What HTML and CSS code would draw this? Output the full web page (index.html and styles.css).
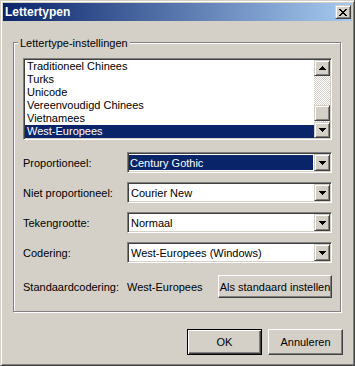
FILE: index.html
```html
<!DOCTYPE html>
<html lang="nl">
<head>
  <meta charset="UTF-8">
  <title>Lettertypen</title>
  <link rel="stylesheet" href="styles.css">
</head>
<body>
  <div class="window">
    <div class="titlebar">
      <span class="title">Lettertypen</span>
      <span class="close">
        <svg width="8" height="7" viewBox="0 0 8 7"><path d="M0 0h2v1H0zM6 0h2v1H6zM1 1h2v1H1zM5 1h2v1H5zM2 2h4v1H2zM3 3h2v1H3zM2 4h4v1H2zM1 5h2v1H1zM5 5h2v1H5zM0 6h2v1H0zM6 6h2v1H6z"/></svg>
      </span>
    </div>

    <div class="content">
      <div class="group">
        <span class="legend">Lettertype-instellingen</span>

        <div class="listbox">
          <ul class="items">
            <li>Traditioneel Chinees</li>
            <li>Turks</li>
            <li>Unicode</li>
            <li>Vereenvoudigd Chinees</li>
            <li>Vietnamees</li>
            <li class="selected">West-Europees</li>
          </ul>
          <div class="scrollbar">
            <span class="sb-btn"><svg width="7" height="4" viewBox="0 0 7 4"><path d="M3 0h1v1h1v1h1v1h1v1H0V3h1V2h1V1h1z"/></svg></span>
            <div class="sb-track"><span class="sb-thumb"></span></div>
            <span class="sb-btn"><svg width="7" height="4" viewBox="0 0 7 4"><path d="M0 0h7v1H6v1H5v1H4v1H3V3H2V2H1V1H0z"/></svg></span>
          </div>
        </div>

        <div class="fields">
          <div class="field-row">
            <label class="label">Proportioneel:</label>
            <div class="combo">
              <span class="combo-value"><span class="highlight">Century Gothic</span></span>
              <span class="combo-btn"><svg width="7" height="4" viewBox="0 0 7 4"><path d="M0 0h7v1H6v1H5v1H4v1H3V3H2V2H1V1H0z"/></svg></span>
            </div>
          </div>
          <div class="field-row">
            <label class="label">Niet proportioneel:</label>
            <div class="combo">
              <span class="combo-value">Courier New</span>
              <span class="combo-btn"><svg width="7" height="4" viewBox="0 0 7 4"><path d="M0 0h7v1H6v1H5v1H4v1H3V3H2V2H1V1H0z"/></svg></span>
            </div>
          </div>
          <div class="field-row">
            <label class="label">Tekengrootte:</label>
            <div class="combo">
              <span class="combo-value">Normaal</span>
              <span class="combo-btn"><svg width="7" height="4" viewBox="0 0 7 4"><path d="M0 0h7v1H6v1H5v1H4v1H3V3H2V2H1V1H0z"/></svg></span>
            </div>
          </div>
          <div class="field-row">
            <label class="label">Codering:</label>
            <div class="combo">
              <span class="combo-value">West-Europees (Windows)</span>
              <span class="combo-btn"><svg width="7" height="4" viewBox="0 0 7 4"><path d="M0 0h7v1H6v1H5v1H4v1H3V3H2V2H1V1H0z"/></svg></span>
            </div>
          </div>
        </div>

        <div class="default-row">
          <span class="label">Standaardcodering:</span>
          <span class="default-value">West-Europees</span>
          <button class="btn wide">Als standaard instellen</button>
        </div>
      </div>

      <div class="actions">
        <button class="btn default">OK</button>
        <button class="btn">Annuleren</button>
      </div>
    </div>
  </div>
</body>
</html>
```

FILE: styles.css
```css
html, body {
  margin: 0;
  background: #d4d0c8;
}

body {
  font-family: 'Liberation Sans', Arial, sans-serif;
  font-size: 11px;
  color: #000;
}

.window {
  box-sizing: border-box;
  width: 355px;
  height: 366px;
  padding: 2px;
  border: 1px solid;
  border-color: #d4d0c8 #404040 #404040 #d4d0c8;
  box-shadow: inset 1px 1px #fff, inset -1px -1px #808080;
  background: #d4d0c8;
}

/* title bar */
.titlebar {
  height: 18px;
  display: flex;
  align-items: center;
  justify-content: space-between;
  padding: 0 1px 0 2px;
  background: linear-gradient(to right, #0a246a, #a6caf0);
}

.title {
  color: #fff;
  font-weight: bold;
  font-size: 12px;
}

.close {
  box-sizing: border-box;
  width: 16px;
  height: 14px;
  display: flex;
  align-items: center;
  justify-content: center;
  background: #d4d0c8;
  border: 1px solid;
  border-color: #d4d0c8 #404040 #404040 #d4d0c8;
  box-shadow: inset 1px 1px #fff, inset -1px -1px #808080;
}

.close svg {
  margin-left: -1px;
}

.content {
  padding: 21px 0 0 10px;
}

/* group box */
.group {
  position: relative;
  box-sizing: border-box;
  width: 328px;
  padding: 15px 8px 13px 9px;
  border: 1px solid #808080;
  box-shadow: inset 1px 1px #fff, 1px 1px #fff;
}

.legend {
  position: absolute;
  top: -6px;
  left: 4px;
  padding: 0 2px;
  line-height: 13px;
  background: #d4d0c8;
}

/* sunken fields */
.listbox,
.combo {
  box-sizing: border-box;
  display: flex;
  background: #fff;
  border: 1px solid;
  border-color: #808080 #fff #fff #808080;
  box-shadow: inset 1px 1px #404040, inset -1px -1px #d4d0c8;
  padding: 1px;
}

.listbox {
  height: 82px;
}

.items {
  flex: 1;
  margin: 0;
  padding: 0;
  list-style: none;
}

.items li {
  height: 13px;
  line-height: 13px;
  padding-left: 2px;
  white-space: nowrap;
}

.items li.selected {
  background: #0a246a;
  color: #fff;
}

.scrollbar {
  width: 16px;
  display: flex;
  flex-direction: column;
}

.sb-btn,
.sb-thumb,
.combo-btn {
  box-sizing: border-box;
  display: flex;
  align-items: center;
  justify-content: center;
  background: #d4d0c8;
  border: 1px solid;
  border-color: #d4d0c8 #404040 #404040 #d4d0c8;
  box-shadow: inset 1px 1px #fff, inset -1px -1px #808080;
}

.sb-btn {
  height: 16px;
}

.sb-track {
  flex: 1;
  background: repeating-conic-gradient(#fff 0 25%, #d4d0c8 0 50%) 0 0 / 2px 2px;
}

.sb-thumb {
  height: 16px;
  margin-top: 29px;
}

/* combos */
.fields {
  display: flex;
  flex-direction: column;
  gap: 9px;
  margin-top: 12px;
}

.field-row {
  display: flex;
  align-items: center;
}

.label {
  width: 104px;
  white-space: nowrap;
}

.combo {
  width: 205px;
  height: 21px;
}

.combo-value {
  flex: 1;
  display: flex;
  align-items: center;
  padding-left: 2px;
  white-space: nowrap;
}

.combo-value .highlight {
  align-self: stretch;
  flex: 1;
  display: flex;
  align-items: center;
  margin: 1px 1px 1px -2px;
  padding-left: 1px;
  background: #0a246a;
  color: #fff;
}

.combo-btn {
  width: 16px;
}

/* default encoding */
.default-row {
  display: flex;
  align-items: center;
  margin-top: 12px;
}

.default-value {
  flex: 1;
}

/* buttons */
.btn {
  box-sizing: border-box;
  height: 26px;
  width: 75px;
  padding: 0;
  font-family: inherit;
  font-size: 11px;
  color: #000;
  background: #d4d0c8;
  border: 1px solid;
  border-color: #fff #404040 #404040 #fff;
  box-shadow: inset -1px -1px #808080, inset 1px 1px #d4d0c8;
}

.btn.wide {
  width: 114px;
  height: 23px;
}

.btn.default {
  border-color: #000;
  box-shadow: inset 1px 1px #fff, inset -1px -1px #404040, inset -2px -2px #808080;
}

.actions {
  display: flex;
  justify-content: flex-end;
  gap: 6px;
  margin-top: 17px;
  padding-right: 9px;
}
```
